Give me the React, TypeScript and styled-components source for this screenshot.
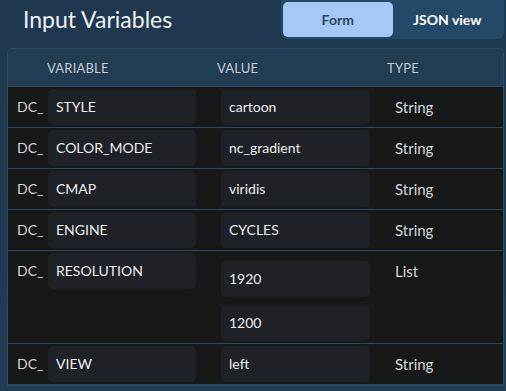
import React from 'react';
import styled, { createGlobalStyle } from 'styled-components';

interface Variable {
    name: string;
    values: string[];
    type: string;
}

const variables: Variable[] = [
    { name: 'STYLE', values: ['cartoon'], type: 'String' },
    { name: 'COLOR_MODE', values: ['nc_gradient'], type: 'String' },
    { name: 'CMAP', values: ['viridis'], type: 'String' },
    { name: 'ENGINE', values: ['CYCLES'], type: 'String' },
    { name: 'RESOLUTION', values: ['1920', '1200'], type: 'List' },
    { name: 'VIEW', values: ['left'], type: 'String' },
];

const GlobalStyle = createGlobalStyle`
    html, body {
        margin: 0;
        padding: 0;
        background: #1f3851;
    }
    body {
        font-family: 'Lato', 'Noto Sans', sans-serif;
        color: #e6e8ea;
    }
`;

const Page = styled.div`
    width: 506px;
    height: 391px;
    box-sizing: border-box;
    background: linear-gradient(180deg, #1f3850 0%, #213c55 100%);
    overflow: hidden;
`;

const TopBar = styled.div`
    display: flex;
    align-items: flex-start;
    justify-content: space-between;
    height: 48px;
    padding: 0 2px 0 23px;
`;

const Title = styled.h1`
    margin: 5px 0 0;
    font-size: 23px;
    font-weight: 400;
    color: #eef1f4;
    line-height: 28px;
`;

const Toggle = styled.div`
    display: flex;
    width: 223px;
    height: 39px;
    box-sizing: border-box;
    padding: 2px;
    background: #234868;
    border-radius: 0 0 6px 6px;
`;

const ToggleButton = styled.button<{ $active?: boolean }>`
    flex: 1;
    border: none;
    border-radius: 5px;
    font-family: inherit;
    font-size: 14px;
    font-weight: 700;
    cursor: pointer;
    background: ${(p) => (p.$active ? '#a5c8f7' : 'transparent')};
    color: ${(p) => (p.$active ? '#2a4964' : '#ffffff')};
`;

const Card = styled.div`
    margin: 0 2px 0 7px;
    border: 1px solid #2f4b63;
    border-bottom-width: 2px;
    border-radius: 6px 6px 0 0;
    overflow: hidden;
`;

const HeaderRow = styled.div`
    display: grid;
    grid-template-columns: 39px 170px 170px 1fr;
    height: 37px;
    align-items: center;
    background: #223c54;
    font-size: 13px;
    color: #c3cad1;
    letter-spacing: 0.2px;
`;

const HeaderCell = styled.div`
    &:first-child {
        grid-column: 2;
    }
`;

const Row = styled.div`
    display: flex;
    align-items: flex-start;
    padding: 2px 0 2px 9px;
    background: #171818;
    border-top: 1px solid #2e4860;
    font-size: 14px;
`;

const Prefix = styled.div`
    width: 31px;
    height: 36px;
    line-height: 36px;
    color: #d0d3d6;
    font-size: 14px;
`;

const Field = styled.div`
    height: 36px;
    line-height: 36px;
    padding: 0 8px;
    box-sizing: border-box;
    background: #1e2125;
    border-radius: 5px;
    color: #eceef0;
    white-space: nowrap;
    overflow: hidden;
`;

const NameField = styled(Field)`
    width: 148px;
`;

const ValueList = styled.div<{ $multi: boolean }>`
    display: flex;
    flex-direction: column;
    gap: 8px;
    width: 149px;
    margin-left: 25px;
    margin-top: ${(p) => (p.$multi ? '8px' : '0')};
`;

const TypeCell = styled.div`
    margin-left: 25px;
    height: 36px;
    line-height: 36px;
    font-size: 15px;
    color: #d4d7da;
`;

export default function App() {
    return (
        <Page>
            <GlobalStyle />
            <TopBar>
                <Title>Input Variables</Title>
                <Toggle>
                    <ToggleButton $active>Form</ToggleButton>
                    <ToggleButton>JSON view</ToggleButton>
                </Toggle>
            </TopBar>
            <Card>
                <HeaderRow>
                    <HeaderCell>VARIABLE</HeaderCell>
                    <HeaderCell>VALUE</HeaderCell>
                    <HeaderCell>TYPE</HeaderCell>
                </HeaderRow>
                {variables.map((v) => (
                    <Row key={v.name}>
                        <Prefix>DC_</Prefix>
                        <NameField>{v.name}</NameField>
                        <ValueList $multi={v.values.length > 1}>
                            {v.values.map((val) => (
                                <Field key={val}>{val}</Field>
                            ))}
                        </ValueList>
                        <TypeCell>{v.type}</TypeCell>
                    </Row>
                ))}
            </Card>
        </Page>
    );
}
